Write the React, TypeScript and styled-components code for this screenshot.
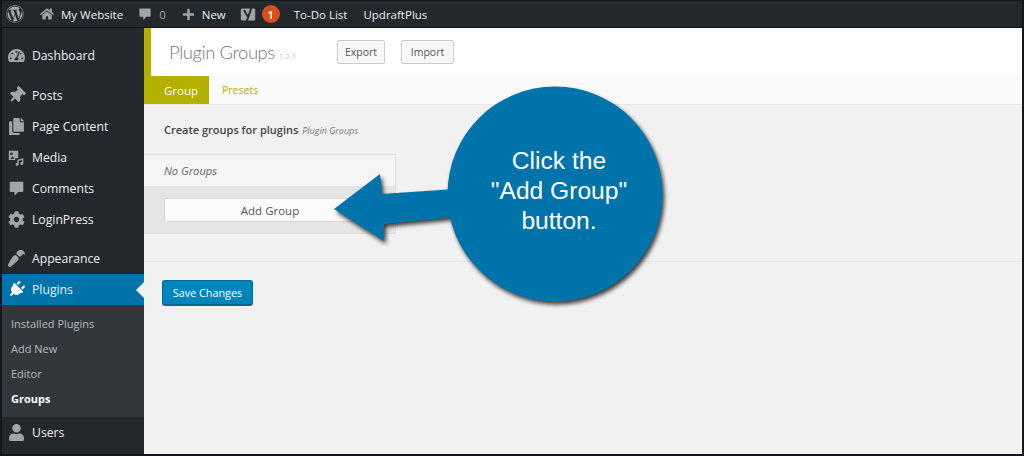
import React from 'react';
import styled, { createGlobalStyle } from 'styled-components';
import {
  FaWordpress,
  FaHome,
  FaPlus,
  FaTachometerAlt,
  FaThumbtack,
  FaCopy,
  FaCog,
  FaPaintBrush,
  FaPlug,
  FaUser,
} from 'react-icons/fa';

const GlobalStyle = createGlobalStyle`
  html, body {
    margin: 0;
    padding: 0;
    background: #fff;
  }
  * {
    box-sizing: border-box;
  }
`;

const olive = '#b4b000';
const sideBg = '#23282d';
const font = '"Open Sans", "Liberation Sans", sans-serif';

const Frame = styled.div`
  position: relative;
  width: 1024px;
  height: 456px;
  border: solid #15181b;
  border-width: 1px 2px 2px 2px;
  display: flex;
  flex-direction: column;
  overflow: hidden;
  font-family: ${font};
`;

const TopBar = styled.div`
  height: 27px;
  flex: none;
  background: ${sideBg};
  display: flex;
  align-items: center;
  color: #eee;
  font-size: 11.5px;
  border-bottom: 1px solid #111;
`;

const BarIcon = styled.span<{ $left: number; $size: number }>`
  display: flex;
  margin-left: ${(p) => p.$left}px;
  color: #a0a5aa;
  svg {
    width: ${(p) => p.$size}px;
    height: ${(p) => p.$size}px;
  }
`;

const BarText = styled.span<{ $left: number; $dim?: boolean }>`
  margin-left: ${(p) => p.$left}px;
  color: ${(p) => (p.$dim ? '#a0a5aa' : '#eee')};
  white-space: nowrap;
`;

const Badge = styled.span`
  width: 18px;
  height: 18px;
  margin-left: 6px;
  border-radius: 50%;
  background: #d9501e;
  color: #fff;
  font-size: 11px;
  font-weight: 600;
  display: flex;
  align-items: center;
  justify-content: center;
`;

const Body = styled.div`
  flex: 1;
  display: flex;
  min-height: 0;
`;

const Sidebar = styled.nav`
  width: 142px;
  flex: none;
  background: ${sideBg};
  padding-top: 12px;
`;

const MenuGroup = styled.div<{ $gap: number }>`
  margin-bottom: ${(p) => p.$gap}px;
`;

const MenuRow = styled.div<{ $active?: boolean }>`
  position: relative;
  height: 31px;
  display: flex;
  align-items: center;
  padding: 0 0 1px 30px;
  font-size: 12.2px;
  color: #eee;
  background: ${(p) => (p.$active ? '#0073aa' : 'transparent')};
  svg {
    position: absolute;
    left: 6px;
    top: 7px;
    width: 17px;
    height: 17px;
    color: ${(p) => (p.$active ? '#fff' : '#a0a5aa')};
  }
`;

const Turned = styled.span<{ $deg: number }>`
  svg {
    transform: rotate(${(p) => p.$deg}deg);
  }
`;

const ActiveNotch = styled.span`
  position: absolute;
  right: 0;
  top: 8px;
  border: 8px solid transparent;
  border-right-color: #f1f1f1;
  border-left: 0;
`;

const SubMenu = styled.div`
  background: #32373c;
  padding: 6px 0;
`;

const SubRow = styled.div<{ $current?: boolean }>`
  height: 25px;
  display: flex;
  align-items: center;
  padding-left: 9px;
  font-size: 11px;
  color: ${(p) => (p.$current ? '#fff' : '#b4b9be')};
  font-weight: ${(p) => (p.$current ? 700 : 400)};
`;

const Main = styled.main`
  flex: 1;
  background: #f1f1f1;
  display: flex;
  flex-direction: column;
`;

const Header = styled.header`
  height: 48px;
  flex: none;
  background: #fff;
  border-left: 7px solid ${olive};
  display: flex;
  align-items: center;
  padding-left: 18px;
`;

const Title = styled.h1`
  margin: 0;
  width: 168px;
  font-family: Lato, ${font};
  font-size: 18.5px;
  letter-spacing: -0.45px;
  font-weight: 300;
  color: #72777c;
  white-space: nowrap;
  small {
    font-family: ${font};
    font-size: 8px;
    letter-spacing: 0;
    margin-left: 4px;
    color: #999;
  }
`;

const GhostButton = styled.button<{ $width: number }>`
  width: ${(p) => p.$width}px;
  height: 24px;
  padding: 0;
  margin-right: 16px;
  background: #f7f7f7;
  border: 1px solid #ccc;
  border-radius: 2px;
  font-family: ${font};
  font-size: 10.5px;
  color: #555;
`;

const Tabs = styled.div`
  height: 29px;
  flex: none;
  display: flex;
  background: #fafafa;
  border-bottom: 1px solid #e8e8e8;
`;

const Tab = styled.div<{ $active?: boolean }>`
  width: 65px;
  padding-left: ${(p) => (p.$active ? 20 : 13)}px;
  display: flex;
  align-items: center;
  font-size: ${(p) => (p.$active ? 11.5 : 10.5)}px;
  background: ${(p) => (p.$active ? olive : 'transparent')};
  color: ${(p) => (p.$active ? '#fff' : olive)};
`;

const Intro = styled.p`
  margin: 0;
  padding: 17px 0 0 20px;
  height: 49px;
  font-size: 11px;
  font-weight: 600;
  color: #444;
  em {
    font-size: 9px;
    font-weight: 400;
    color: #777;
    margin-left: 1px;
  }
`;

const GroupBox = styled.section`
  width: 252px;
  height: 80px;
  flex: none;
  border: solid #dedede;
  border-width: 1px 1px 1px 0;
  background: #f5f5f5;
  display: flex;
  flex-direction: column;
`;

const EmptyRow = styled.div`
  height: 31px;
  flex: none;
  display: flex;
  align-items: center;
  padding-left: 20px;
  font-size: 11.2px;
  font-style: italic;
  color: #666;
`;

const AddRow = styled.div`
  flex: 1;
  background: #e5e5e5;
  padding: 12px 19px 0 20px;
`;

const AddButton = styled.button`
  display: block;
  width: 100%;
  height: 24px;
  background: #fbfbfb;
  border: 1px solid #d8d8d8;
  border-radius: 2px;
  font-family: ${font};
  font-size: 11.5px;
  color: #555;
`;

const Divider = styled.hr`
  margin: 27px 0 0;
  border: 0;
  border-top: 1px solid #e6e6e6;
`;

const SaveButton = styled.button`
  align-self: flex-start;
  margin: 18px 0 0 18px;
  width: 91px;
  height: 26px;
  padding: 0;
  background: #0085ba;
  border: 1px solid #006799;
  border-bottom-width: 2px;
  border-radius: 3px;
  font-family: ${font};
  font-size: 10.8px;
  color: #fff;
`;

const Callout = styled.div`
  position: absolute;
  left: 323px;
  top: 79px;
  width: 350px;
  height: 235px;
`;

const CalloutShape = styled.svg`
  display: block;
  filter: drop-shadow(2px 3px 2px rgba(0, 0, 0, 0.75));
`;

const CalloutText = styled.div`
  position: absolute;
  left: 129px;
  top: 66px;
  width: 210px;
  text-align: center;
  color: #fff;
  font-family: 'Liberation Sans', Arial, sans-serif;
  font-size: 24.6px;
  line-height: 30px;
`;

const CommentIcon = () => (
  <svg viewBox="0 0 20 20" fill="currentColor">
    <path d="M3 2h14a1 1 0 0 1 1 1v10a1 1 0 0 1-1 1h-5l-4.500 4.500V14H3a1 1 0 0 1-1-1V3a1 1 0 0 1 1-1z" />
  </svg>
);

const MediaIcon = () => (
  <svg viewBox="0 0 20 20" fill="currentColor">
    <path d="M1 2h11v9H8.500v2H1V2zm3 2.200a1.500 1.500 0 1 0 0 3 1.500 1.500 0 0 0 0-3zM2.500 11.500h5l-2-3-1.500 1.500-1.500 1.500z" fillRule="evenodd" />
    <path d="M11 12.500l7-1.500v6a1.800 1.800 0 1 1-1.500-1.800V13l-4 .9V18a1.800 1.800 0 1 1-1.500-1.800v-3.700z" />
  </svg>
);

const YoastIcon = () => (
  <svg viewBox="0 0 20 20">
    <path fill="currentColor" d="M3 3h15a1 1 0 0 1 1 1v13a1 1 0 0 1-1 1H3a2 2 0 0 1-2-2V5a2 2 0 0 1 2-2z" />
    <path fill="none" stroke="#23282d" strokeWidth="2.400" d="M5 5l4.500 8M14.500 1.500L8.500 19" />
  </svg>
);

const sideTop = [
  {
    label: 'Posts',
    icon: (
      <Turned $deg={45}>
        <FaThumbtack />
      </Turned>
    ),
  },
  { label: 'Page Content', icon: <FaCopy /> },
  { label: 'Media', icon: <MediaIcon /> },
  { label: 'Comments', icon: <CommentIcon /> },
  { label: 'LoginPress', icon: <FaCog /> },
];

const subItems = ['Installed Plugins', 'Add New', 'Editor', 'Groups'];

export default function App() {
  return (
    <Frame>
      <GlobalStyle />
      <TopBar>
        <BarIcon $left={4} $size={18}>
          <FaWordpress />
        </BarIcon>
        <BarIcon $left={16} $size={14}>
          <FaHome />
        </BarIcon>
        <BarText $left={7}>My Website</BarText>
        <BarIcon $left={15} $size={14}>
          <CommentIcon />
        </BarIcon>
        <BarText $left={7} $dim>
          0
        </BarText>
        <BarIcon $left={16} $size={13}>
          <FaPlus />
        </BarIcon>
        <BarText $left={7}>New</BarText>
        <BarIcon $left={14} $size={16}>
          <YoastIcon />
        </BarIcon>
        <Badge>1</Badge>
        <BarText $left={14}>To-Do List</BarText>
        <BarText $left={16}>UpdraftPlus</BarText>
      </TopBar>
      <Body>
        <Sidebar>
          <MenuGroup $gap={9}>
            <MenuRow>
              <FaTachometerAlt />
              Dashboard
            </MenuRow>
          </MenuGroup>
          <MenuGroup $gap={8}>
            {sideTop.map((item) => (
              <MenuRow key={item.label}>
                {item.icon}
                {item.label}
              </MenuRow>
            ))}
          </MenuGroup>
          <MenuRow>
            <Turned $deg={180}>
              <FaPaintBrush />
            </Turned>
            Appearance
          </MenuRow>
          <MenuRow $active>
            <Turned $deg={45}>
              <FaPlug />
            </Turned>
            Plugins
            <ActiveNotch />
          </MenuRow>
          <SubMenu>
            {subItems.map((label) => (
              <SubRow key={label} $current={label === 'Groups'}>
                {label}
              </SubRow>
            ))}
          </SubMenu>
          <MenuRow>
            <FaUser />
            Users
          </MenuRow>
        </Sidebar>
        <Main>
          <Header>
            <Title>
              Plugin Groups<small>1.2.1</small>
            </Title>
            <GhostButton $width={48}>Export</GhostButton>
            <GhostButton $width={53}>Import</GhostButton>
          </Header>
          <Tabs>
            <Tab $active>Group</Tab>
            <Tab>Presets</Tab>
          </Tabs>
          <Intro>
            Create groups for plugins <em>Plugin Groups</em>
          </Intro>
          <GroupBox>
            <EmptyRow>No Groups</EmptyRow>
            <AddRow>
              <AddButton>Add Group</AddButton>
            </AddRow>
          </GroupBox>
          <Divider />
          <SaveButton>Save Changes</SaveButton>
        </Main>
      </Body>
      <Callout>
        <CalloutShape width="350" height="235" viewBox="0 0 350 235">
          <path
            fill="#0073aa"
            d="M9 129 L55 94 L57 114 L130 109 L130 137 L59 144 L59 161 Z"
          />
          <circle cx="230" cy="114" r="107.500" fill="#0073aa" />
        </CalloutShape>
        <CalloutText>
          Click the
          <br />
          "Add Group"
          <br />
          button.
        </CalloutText>
      </Callout>
    </Frame>
  );
}
